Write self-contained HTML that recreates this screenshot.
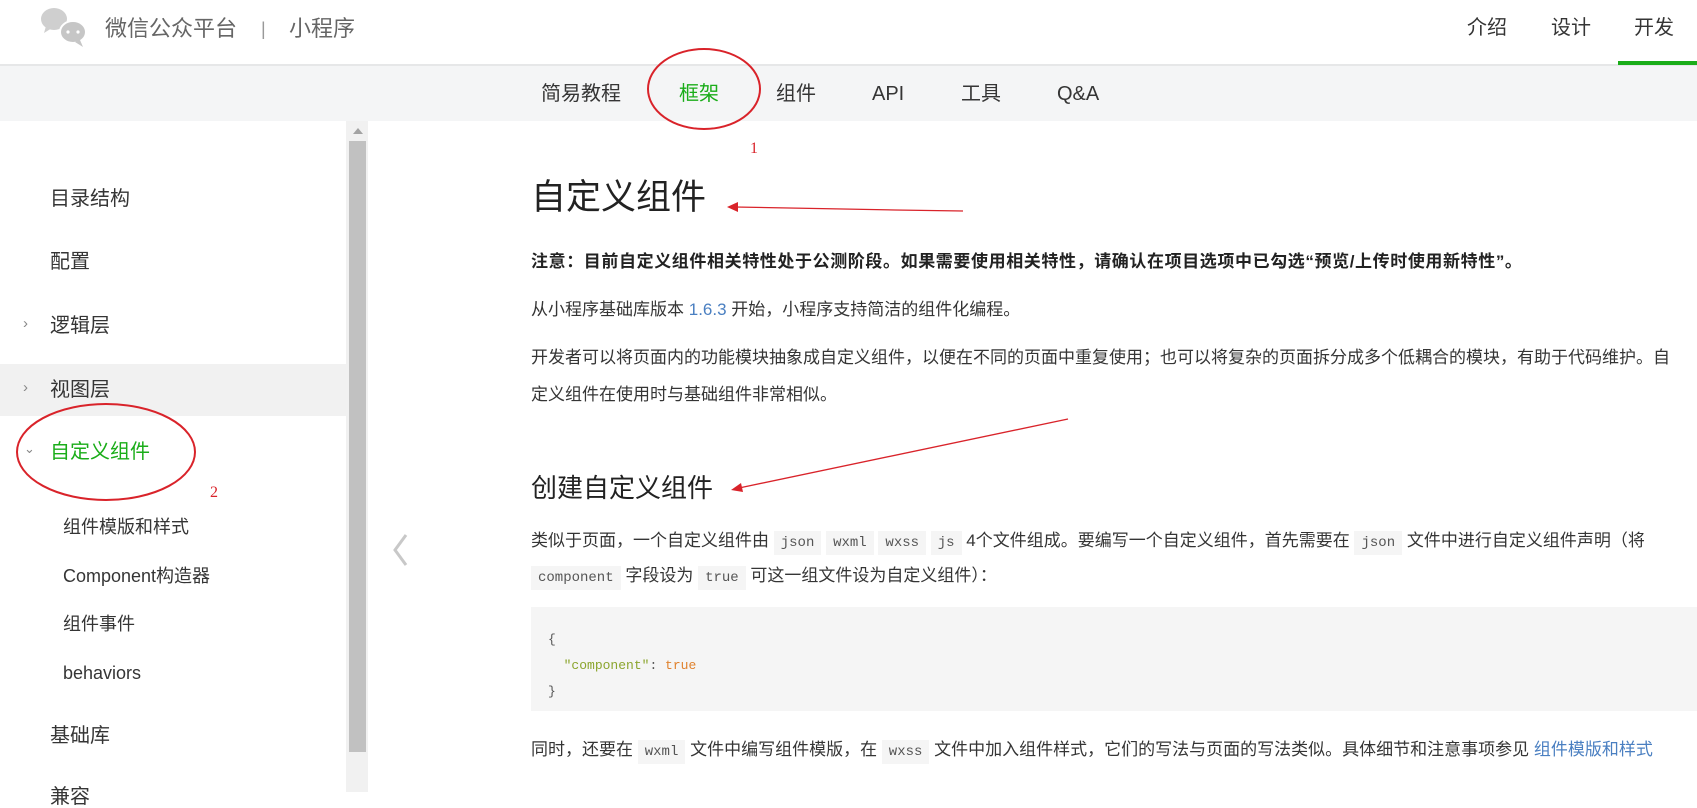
<!DOCTYPE html>
<html><head><meta charset="utf-8"><style>
*{margin:0;padding:0;box-sizing:border-box}
body{width:1697px;height:792px;overflow:hidden;position:relative;background:#fff;font-family:"Liberation Sans","Noto Sans CJK SC",sans-serif;color:#353535;white-space:nowrap}
.a{position:absolute;line-height:1}
.hdr{position:absolute;left:0;top:0;width:1697px;height:66px;border-bottom:2px solid #e6e7e8}
.sub{position:absolute;left:0;top:66px;width:1697px;height:55px;background:#f4f5f6}
.sb{position:absolute;left:0;top:121px;width:346px;height:671px;background:#fff}
.track{position:absolute;left:346px;top:121px;width:22px;height:671px;background:#f1f1f1}
.thumb{position:absolute;left:349px;top:141px;width:17px;height:611px;background:#c1c1c1}
.side{font-size:20px;color:#353535}
.subi{font-size:18px;color:#353535}
code{font-family:"Liberation Mono",monospace;font-size:14px;background:#f5f5f5;padding:4px 7px;color:#555}
.p{font-size:17px;color:#353535}
</style></head><body>
<div class="hdr"></div>
<svg class="a" style="left:40px;top:6px" width="50" height="44" viewBox="0 0 50 44">
<ellipse cx="14" cy="13" rx="13" ry="11" fill="#cfcfcf"/><path d="M6 20 L4 27 L12 22Z" fill="#cfcfcf"/>
<ellipse cx="33" cy="26" rx="13" ry="11" fill="#c6c6c6" stroke="#fff" stroke-width="2"/><path d="M40 34 L43 41 L35 36Z" fill="#c6c6c6"/>
<circle cx="28" cy="26" r="1.6" fill="#fff"/><circle cx="38" cy="26" r="1.6" fill="#fff"/></svg>
<div class="a" style="left:105px;top:18px;font-size:22px;color:#666">微信公众平台</div>
<div class="a" style="left:261px;top:20px;font-size:18px;color:#999">|</div>
<div class="a" style="left:289px;top:18px;font-size:22px;color:#666">小程序</div>
<div class="a" style="left:1467px;top:18px;font-size:20px;color:#353535">介绍</div>
<div class="a" style="left:1551px;top:18px;font-size:20px;color:#353535">设计</div>
<div class="a" style="left:1634px;top:18px;font-size:20px;color:#353535">开发</div>
<div class="a" style="left:1618px;top:61px;width:79px;height:4px;background:#1aad19"></div>
<div class="sub"></div>
<div class="a" style="left:541px;top:84px;font-size:20px">简易教程</div>
<div class="a" style="left:679px;top:84px;font-size:20px;color:#1aad19">框架</div>
<div class="a" style="left:776px;top:84px;font-size:20px">组件</div>
<div class="a" style="left:872px;top:84px;font-size:20px">API</div>
<div class="a" style="left:961px;top:84px;font-size:20px">工具</div>
<div class="a" style="left:1057px;top:84px;font-size:20px">Q&amp;A</div>
<div class="sb"></div>
<div class="a" style="left:0;top:364px;width:346px;height:52px;background:#f1f1f1"></div>
<div class="track"></div><div class="thumb"></div>
<div class="a" style="left:353px;top:128px;width:0;height:0;border-left:5px solid transparent;border-right:5px solid transparent;border-bottom:6px solid #a3a3a3"></div>
<div class="a side" style="left:50px;top:189px">目录结构</div>
<div class="a side" style="left:50px;top:252px">配置</div>
<div class="a" style="left:23px;top:316px;font-size:15px;color:#888">›</div>
<div class="a side" style="left:50px;top:316px">逻辑层</div>
<div class="a" style="left:23px;top:380px;font-size:15px;color:#888">›</div>
<div class="a side" style="left:50px;top:380px">视图层</div>
<div class="a" style="left:24px;top:442px;font-size:13px;color:#888">⌄</div>
<div class="a side" style="left:50px;top:442px;color:#1aad19">自定义组件</div>
<div class="a subi" style="left:63px;top:518px">组件模版和样式</div>
<div class="a subi" style="left:63px;top:567px">Component构造器</div>
<div class="a subi" style="left:63px;top:615px">组件事件</div>
<div class="a subi" style="left:63px;top:664px">behaviors</div>
<div class="a side" style="left:50px;top:726px">基础库</div>
<div class="a side" style="left:50px;top:787px">兼容</div>
<svg class="a" style="left:390px;top:532px" width="22" height="36"><path d="M16 3 L5 18 L16 33" fill="none" stroke="#c8c8c8" stroke-width="3"/></svg>
<div class="a" style="left:531px;top:180px;font-size:35px;color:#222">自定义组件</div>
<div class="a p" style="left:531px;top:253px;font-weight:bold;color:#222;font-size:17px;letter-spacing:0.6px">注意：目前自定义组件相关特性处于公测阶段。如果需要使用相关特性，请确认在项目选项中已勾选“预览/上传时使用新特性”。</div>
<div class="a p" style="left:531px;top:301px">从小程序基础库版本 <span style="color:#4a7fc1">1.6.3</span> 开始，小程序支持简洁的组件化编程。</div>
<div class="a p" style="left:531px;top:349px">开发者可以将页面内的功能模块抽象成自定义组件，以便在不同的页面中重复使用；也可以将复杂的页面拆分成多个低耦合的模块，有助于代码维护。自</div>
<div class="a p" style="left:531px;top:386px">定义组件在使用时与基础组件非常相似。</div>
<div class="a" style="left:531px;top:475px;font-size:26px;color:#222">创建自定义组件</div>
<div class="a p" style="left:531px;top:532px">类似于页面，一个自定义组件由 <code>json</code> <code>wxml</code> <code>wxss</code> <code>js</code> 4个文件组成。要编写一个自定义组件，首先需要在 <code>json</code> 文件中进行自定义组件声明（将</div>
<div class="a p" style="left:531px;top:567px"><code>component</code> 字段设为 <code>true</code> 可这一组文件设为自定义组件）：</div>
<div class="a" style="left:531px;top:607px;width:1166px;height:104px;background:#f5f5f5"></div>
<div class="a" style="left:548px;top:627px;font-family:'Liberation Mono',monospace;font-size:13px;line-height:26px;color:#555;white-space:pre">{
  <span style="color:#8ba52d">"component"</span>: <span style="color:#e0822e">true</span>
}</div>
<div class="a p" style="left:531px;top:741px">同时，还要在 <code>wxml</code> 文件中编写组件模版，在 <code>wxss</code> 文件中加入组件样式，它们的写法与页面的写法类似。具体细节和注意事项参见 <span style="color:#4a7fc1">组件模版和样式</span></div>
<svg class="a" style="left:0;top:0" width="1697" height="792">
<ellipse cx="704" cy="89" rx="56" ry="40" fill="none" stroke="#d9232a" stroke-width="2"/>
<text x="750" y="153" font-family="Liberation Serif" font-size="16" fill="#d9232a">1</text>
<path d="M963 211 L895 210 L735 207" fill="none" stroke="#d9232a" stroke-width="1.3"/>
<path d="M727 207 L738 202 L738 212Z" fill="#d9232a"/>
<ellipse cx="106" cy="452" rx="89" ry="48" fill="none" stroke="#d9232a" stroke-width="2"/>
<text x="210" y="497" font-family="Liberation Serif" font-size="16" fill="#d9232a">2</text>
<path d="M1068 419 L739 488" fill="none" stroke="#d9232a" stroke-width="1.3"/>
<path d="M731 490 L741 483 L743 492Z" fill="#d9232a"/>
</svg>
</body></html>
